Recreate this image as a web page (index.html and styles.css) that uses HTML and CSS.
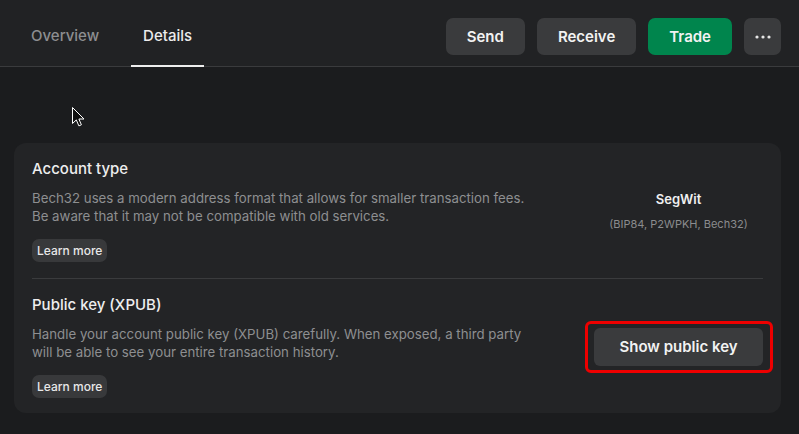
FILE: index.html
```html
<!DOCTYPE html>
<html lang="en">
<head>
<meta charset="utf-8">
<title>Account details</title>
<link rel="stylesheet" href="styles.css">
</head>
<body>
<header class="topbar">
  <nav class="tabs">
    <a class="tab">Overview</a>
    <a class="tab active">Details</a>
  </nav>
  <div class="actions">
    <button class="btn">Send</button>
    <button class="btn">Receive</button>
    <button class="btn btn-green">Trade</button>
    <button class="btn btn-icon" aria-label="More">
      <svg width="16" height="4" viewBox="0 0 16 4"><circle cx="2" cy="2" r="1.6" fill="#e6e6e6"/><circle cx="8" cy="2" r="1.6" fill="#e6e6e6"/><circle cx="14" cy="2" r="1.6" fill="#e6e6e6"/></svg>
    </button>
  </div>
</header>
<main class="content">
  <section class="card">
    <div class="row">
      <div class="info">
        <h2 class="title">Account type</h2>
        <p class="desc">Bech32 uses a modern address format that allows for smaller transaction fees.<br>Be aware that it may not be compatible with old services.</p>
        <button class="pill">Learn more</button>
      </div>
      <div class="side">
        <div class="side-main">SegWit</div>
        <div class="side-sub">(BIP84, P2WPKH, Bech32)</div>
      </div>
    </div>
    <div class="divider"></div>
    <div class="row">
      <div class="info">
        <h2 class="title">Public key (XPUB)</h2>
        <p class="desc">Handle your account public key (XPUB) carefully. When exposed, a third party<br>will be able to see your entire transaction history.</p>
        <button class="pill">Learn more</button>
      </div>
      <div class="side">
        <div class="highlight">
          <button class="btn btn-wide">Show public key</button>
        </div>
      </div>
    </div>
  </section>
</main>
<svg class="cursor" width="13" height="20" viewBox="0 0 13 20"><path d="M0.5 0.5 L0.5 16.5 L4.3 12.9 L6.9 18.9 L9.4 17.8 L6.9 12 L12 12 Z" fill="#111" stroke="#fff" stroke-width="1" stroke-linejoin="miter"/></svg>
</body>
</html>
```

FILE: styles.css
```css
* { box-sizing: border-box; }
html, body { margin: 0; padding: 0; }
body {
  background: #1b1c1e;
  font-family: Inter, "Noto Sans", "Liberation Sans", sans-serif;
  color: #e8e8e8;
  width: 799px;
  height: 434px;
  overflow: hidden;
  position: relative;
}
.topbar {
  height: 67px;
  background: #212224;
  border-bottom: 1px solid #3a3b3d;
  display: flex;
  align-items: stretch;
  justify-content: space-between;
  padding: 0 18px 0 19px;
}
.tabs { display: flex; gap: 20px; }
.tab {
  display: flex;
  align-items: center;
  padding: 6px 12px 0;
  font-size: 15px;
  font-weight: 500;
  color: #8d8e90;
  border-bottom: 2px solid transparent;
  margin-bottom: -1px;
}
.tab.active { color: #ececec; border-bottom-color: #eeeeee; }
.actions { display: flex; align-items: center; gap: 12px; padding-top: 7px; }
.btn {
  font-family: inherit;
  height: 37px;
  padding: 0 21px;
  border: none;
  border-radius: 7px;
  background: #3a3b3d;
  color: #f2f2f2;
  font-size: 15px;
  font-weight: 600;
  display: flex;
  align-items: center;
  justify-content: center;
}
.btn-green { background: #00854d; }
.btn-icon { width: 37px; padding: 0; }
.content { padding: 76px 18px 0 14px; }
.card {
  background: #232426;
  border-radius: 12px;
  padding: 16px 18px 15px 18px;
}
.row { display: flex; align-items: center; justify-content: space-between; }
.info { display: flex; flex-direction: column; align-items: flex-start; }
.title {
  margin: 0;
  font-size: 15px;
  font-weight: 500;
  line-height: 20px;
  color: #eeeeee;
}
.desc {
  margin: 10px 0 14px;
  font-size: 13.25px;
  line-height: 18px;
  color: #8e8f91;
}
.pill {
  font-family: inherit;
  height: 23px;
  padding: 0 5px;
  border: none;
  border-radius: 7px;
  background: #38393b;
  color: #e8e8e8;
  font-size: 12px;
  font-weight: 500;
}
.divider { height: 1px; background: #3a3b3d; margin: 16px 0 16px 0; }
.side {
  width: 169px;
  display: flex;
  flex-direction: column;
  align-items: center;
}
.side-main { font-size: 13px; font-weight: 600; line-height: 18px; color: #f0f0f0; }
.side-sub { font-size: 11px; line-height: 16px; color: #8b8c8e; margin-top: 8px; }
.highlight { position: relative; }
.highlight::after {
  content: "";
  position: absolute;
  top: -7px; bottom: -7px; left: -9px; right: -10px;
  border: 3px solid #ee0000;
  border-radius: 6px;
  pointer-events: none;
}
.btn-wide { width: 169px; height: 38px; border-radius: 6px; padding: 0; }
.cursor { position: absolute; left: 72px; top: 107px; }
```
